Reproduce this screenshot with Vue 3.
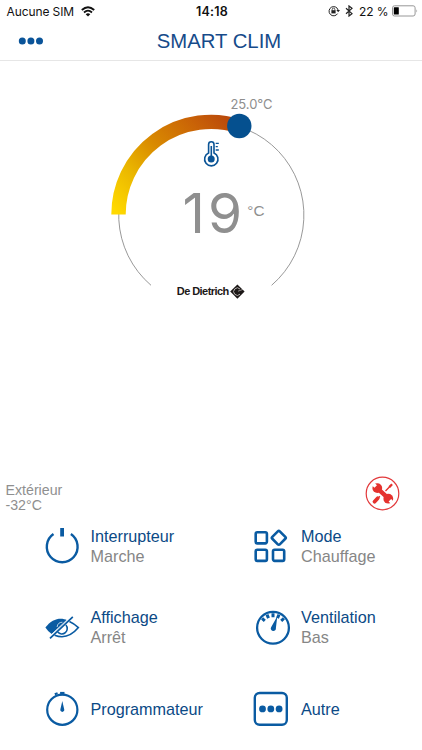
<script setup>
import { ref, computed } from 'vue'

const outdoor = ref('-32°C')
const current = ref(19)
const target = ref(25)

const targetText = computed(() => `${target.value.toFixed(1)}°C`)

const items = [
  { icon: 'power', title: 'Interrupteur', value: 'Marche' },
  { icon: 'mode', title: 'Mode', value: 'Chauffage' },
  { icon: 'eye', title: 'Affichage', value: 'Arrêt' },
  { icon: 'fan', title: 'Ventilation', value: 'Bas' },
  { icon: 'timer', title: 'Programmateur' },
  { icon: 'more', title: 'Autre' }
]
</script>

<template>
  <div class="screen">
    <!-- status bar -->
    <div class="status">
      <div class="status-left">
        <span class="carrier">Aucune SIM</span>
        <svg class="wifi" width="14" height="11" viewBox="0 0 14 11">
          <path d="M0.8 4 Q7 -1.6 13.2 4" fill="none" stroke="#111" stroke-width="1.9" />
          <path d="M3 6.5 Q7 2.8 11 6.5" fill="none" stroke="#111" stroke-width="1.8" />
          <path d="M4.7 8.2 Q7 6.2 9.3 8.2 L7 10.5 Z" fill="#111" />
        </svg>
      </div>
      <span class="clock">14:18</span>
      <div class="status-right">
        <svg width="12" height="12" viewBox="0 0 12 12">
          <path d="M9.6 8.6 A4.6 4.6 0 1 1 10.1 5" fill="none" stroke="#222" stroke-width="1" />
          <path d="M8.4 5 H12 L10.2 7.3 Z" fill="#222" />
          <rect x="3.4" y="5.2" width="4.2" height="3.2" fill="#222" />
          <path d="M4.2 5.5 V4.4 A1.3 1.3 0 0 1 6.8 4.4 V5.5" fill="none" stroke="#222" stroke-width="0.8" />
        </svg>
        <svg class="bluetooth" width="8" height="12" viewBox="0 0 8 12">
          <path d="M1 3.2 L7 8.6 L4 11 V1 L7 3.4 L1 8.8" fill="none" stroke="#222" stroke-width="1.2" />
        </svg>
        <span class="percent">22 %</span>
        <svg class="battery" width="26" height="12" viewBox="0 0 26 12">
          <rect x="0.5" y="0.8" width="22.6" height="10.2" rx="2" fill="#fff" stroke="#8c8c8c" stroke-width="0.9" />
          <rect x="1.8" y="2.2" width="5" height="7.4" rx="0.5" fill="#000" />
          <path d="M24.4 4.2 Q26 5.9 24.4 7.6 Z" fill="#999" />
        </svg>
      </div>
    </div>

    <!-- header -->
    <header class="header">
      <svg class="dots" width="26" height="8" viewBox="0 0 26 8">
        <circle cx="4.3" cy="4" r="3.5" />
        <circle cx="12.9" cy="4" r="3.5" />
        <circle cx="21.5" cy="4" r="3.5" />
      </svg>
      <h1>SMART CLIM</h1>
    </header>

    <!-- thermostat -->
    <main class="thermostat">
      <svg class="gauge" width="222" height="220" viewBox="100 90 222 220">
        <defs>
          <linearGradient id="heat" gradientUnits="userSpaceOnUse" x1="118" y1="214" x2="226" y2="114">
            <stop offset="0" stop-color="#ffd900" />
            <stop offset="0.25" stop-color="#ebb800" />
            <stop offset="0.5" stop-color="#d98a00" />
            <stop offset="0.8" stop-color="#c96207" />
            <stop offset="1" stop-color="#b9480b" />
          </linearGradient>
        </defs>
        <path d="M151 285.3 A92.6 92.6 0 1 1 271.6 285.3" fill="none" stroke="#999" stroke-width="1" />
        <path d="M118.5 214.5 A92.6 92.6 0 0 1 239.3 126.3" fill="none" stroke="url(#heat)" stroke-width="14.4" />
        <circle cx="239.3" cy="126" r="12.2" fill="#05508f" />
        <text class="target" x="230.5" y="108.5" textLength="42">{{ targetText }}</text>

        <!-- thermometer -->
        <g fill="none" stroke="#0a5496" stroke-width="1.6">
          <path d="M208.6 153 V144.4 A2.7 2.7 0 0 1 214 144.4 V153 A6.7 6.7 0 1 1 208.6 153 Z" />
          <path d="M211.3 146 V157" stroke-width="1.6" />
          <circle cx="211.2" cy="159" r="3.5" fill="#0a5496" stroke="none" />
          <path d="M215.7 143.4 H218.8 M215.7 146.7 H217.8 M215.7 150 H218.8" stroke-width="1.3" />
        </g>

        <text class="current" x="182.6" y="232.6" textLength="59.6">{{ current }}</text>
        <text class="unit" x="247.3" y="216">°C</text>

        <!-- brand -->
        <text class="brand" x="176.8" y="295.4" textLength="52.4">De Dietrich</text>
        <path d="M237.4 284.5 L244.6 291.6 L237.4 298.8 L230.2 291.6 Z" fill="#1c1817" />
        <path d="M240 289 A3.7 3.7 0 1 0 240 294.2" fill="none" stroke="#c4bfbd" stroke-width="0.9" />
        <path d="M238 291.2 L243 289.4" fill="none" stroke="#c4bfbd" stroke-width="0.7" />
      </svg>
    </main>

    <section class="info">
      <div class="outdoor">
        <div>Extérieur</div>
        <div>{{ outdoor }}</div>
      </div>
      <svg width="36" height="36" viewBox="-18 -18 36 36">
        <g transform="translate(-0.5 -0.5)">
          <!-- wrench -->
          <circle cx="-5.2" cy="-5.4" r="4.9" fill="#e5322e" />
          <circle cx="5.8" cy="5.2" r="4.9" fill="#e5322e" />
          <path d="M-11.4 -11.6 L-6.8 -7 M12 11.4 L7.4 6.8" stroke="#fff" stroke-width="3.6" />
          <path d="M-4 -4.2 L5 4.2" stroke="#e5322e" stroke-width="4.4" />
          <!-- screwdriver -->
          <path d="M8.6 -8.2 L3 -2.6 M-2.6 2.8 L-5 5.2" stroke="#e5322e" stroke-width="1.4" />
          <path d="M9.6 -9.2 L6.8 -6.4" stroke="#e5322e" stroke-width="2.2" />
          <path d="M-4.8 4.8 L-8 8.2" stroke="#e5322e" stroke-width="3.8" stroke-linecap="round" />
          <circle r="16.3" fill="none" stroke="#e2393b" stroke-width="1.2" />
        </g>
      </svg>
    </section>

    <!-- menu -->
    <nav class="menu">
      <div v-for="item in items" :key="item.icon" class="item">
        <svg class="icon" width="40" height="40" viewBox="-20 -20 40 40">
          <g v-if="item.icon === 'power'">
            <path d="M-8.5 -11.9 A15.4 15.4 0 1 0 8.9 -11.9" stroke-width="2.4" />
            <path d="M0.1 -18 V-9.5" stroke-width="3.8" />
          </g>
          <g v-else-if="item.icon === 'mode'" stroke-width="2.6">
            <rect x="-17.3" y="-13.8" width="11.2" height="11.2" rx="1.6" />
            <rect x="-17.3" y="3.7" width="11.2" height="11.2" rx="1.6" />
            <rect x="0" y="3.7" width="11.2" height="11.2" rx="1.6" />
            <rect x="0.5" y="-13.5" width="10.6" height="10.6" rx="1.4" transform="rotate(45 5.8 -8.2)" />
          </g>
          <g v-else-if="item.icon === 'eye'" stroke-width="1.6">
            <path d="M-16.6 -0.4 C-10 -9.6 -1 -10.8 5.2 -7.8 L-10 6.3 Q-14 3.8 -16.6 -0.4 Z" fill="#0a5ba2" stroke="none" />
            <path d="M7.4 -6.6 Q12.4 -4.4 16.4 -0.4 C9 8.4 0.4 10.4 -7.4 7.2" />
            <path d="M3.9 -3 A5.3 5.3 0 0 1 -4.3 4.1" />
            <path d="M-4.9 -1 A5.4 5.4 0 0 1 0.4 -5.8" stroke="#fff" stroke-width="0.7" />
            <path d="M-12 10.4 L10.8 -11.2" stroke-width="1.7" />
            <path d="M-12.8 8.6 L9 -11.8" stroke="#fff" stroke-width="0.9" />
          </g>
          <g v-else-if="item.icon === 'fan'">
            <circle cx="0" cy="-0.2" r="15.9" stroke-width="2.3" />
            <path d="M-10.9 -9.6 L-8.2 -7.2 M-6 -13.4 L-4.5 -9.8 M0 -14.8 V-10.8 M6 -13.4 L4.5 -9.8 M10.9 -9.6 L8.2 -7.2" stroke-width="3" />
            <path d="M4.3 -11.8 L2.9 0 A2.6 2.6 0 1 1 -1.9 -0.8 Z" fill="#0a5ba2" stroke="none" />
          </g>
          <g v-else-if="item.icon === 'timer'">
            <circle cx="0.3" cy="0.7" r="15.1" stroke-width="2.2" />
            <path d="M-1.9 -15.4 H2.5" stroke-width="3.4" />
            <path d="M-7.2 -14.8 L-4.4 -15.8" stroke-width="2" />
            <path d="M0.3 -8 L2.2 0.3 A2 2 0 1 1 -1.6 0.3 Z" fill="#0a5ba2" stroke="none" />
          </g>
          <g v-else>
            <rect x="-18.2" y="-16" width="32" height="31.8" rx="4.8" stroke-width="2.4" />
            <g fill="#0a5ba2" stroke="none">
              <circle cx="-10.5" cy="-0.1" r="3.4" />
              <circle cx="-2.2" cy="-0.1" r="3.4" />
              <circle cx="6.1" cy="-0.1" r="3.4" />
            </g>
          </g>
        </svg>
        <div class="label">
          <div class="title">{{ item.title }}</div>
          <div v-if="item.value" class="value">{{ item.value }}</div>
        </div>
      </div>
    </nav>
  </div>
</template>

<style>
body {
  margin: 0;
  background: #fff;
}
</style>

<style scoped>
.screen {
  display: flex;
  flex-direction: column;
  width: 422px;
  height: 750px;
  overflow: hidden;
  background: #fff;
  font-family: "Liberation Sans", Arial, sans-serif;
}

.status {
  display: grid;
  grid-template-columns: 1fr auto 1fr;
  align-items: center;
  height: 22px;
  padding: 0 4.5px 0 6.5px;
  font-family: Inter, Roboto, sans-serif;
  font-size: 12px;
  color: #111;
}
.status-left,
.status-right {
  display: flex;
  align-items: center;
}
.status-right {
  justify-content: flex-end;
}
.carrier {
  letter-spacing: -0.1px;
}
.wifi {
  margin-left: 6.5px;
}
.clock {
  font-weight: 600;
  font-size: 12.5px;
  letter-spacing: 0.25px;
}
.bluetooth {
  margin-left: 5px;
}
.percent {
  margin: 0 3px 0 6px;
  letter-spacing: -0.1px;
}

.header {
  display: grid;
  grid-template-columns: 1fr auto 1fr;
  align-items: center;
  height: 38px;
  padding: 0 2px 0 18px;
  border-bottom: 1px solid #e6e6e6;
}
.header h1 {
  margin: 0;
  font-size: 20.3px;
  font-weight: 400;
  color: #164b8a;
}
.dots {
  fill: #0a5499;
}

.thermostat {
  flex: 1;
  display: flex;
  justify-content: center;
  padding-top: 29px;
}
.target {
  font-family: Inter, Roboto, sans-serif;
  font-size: 13px;
  fill: #8e8e8e;
}
.current {
  font-family: Inter, Roboto, sans-serif;
  font-size: 55px;
  fill: #8f8f8f;
}
.unit {
  font-size: 15.3px;
  fill: #8f8f8f;
}
.brand {
  font-size: 11px;
  font-weight: 700;
  fill: #1c1817;
}

.info {
  display: flex;
  justify-content: space-between;
  height: 30px;
  padding: 0 21.5px 0 5.5px;
}
.outdoor {
  padding-top: 7px;
  font-size: 14.2px;
  line-height: 15.5px;
  color: #8f8f8f;
}

.menu {
  display: grid;
  grid-template-columns: 210.5px 1fr;
  grid-template-rows: repeat(3, 81.5px);
  padding-left: 42px;
}
.item {
  display: flex;
  align-items: center;
  gap: 8.5px;
}
.icon {
  fill: none;
  stroke: #0a5ba2;
}
.label {
  padding-bottom: 0.8px;
  font-size: 16.2px;
  line-height: 20px;
}
.title {
  color: #0b4a86;
}
.value {
  color: #868686;
}
</style>
